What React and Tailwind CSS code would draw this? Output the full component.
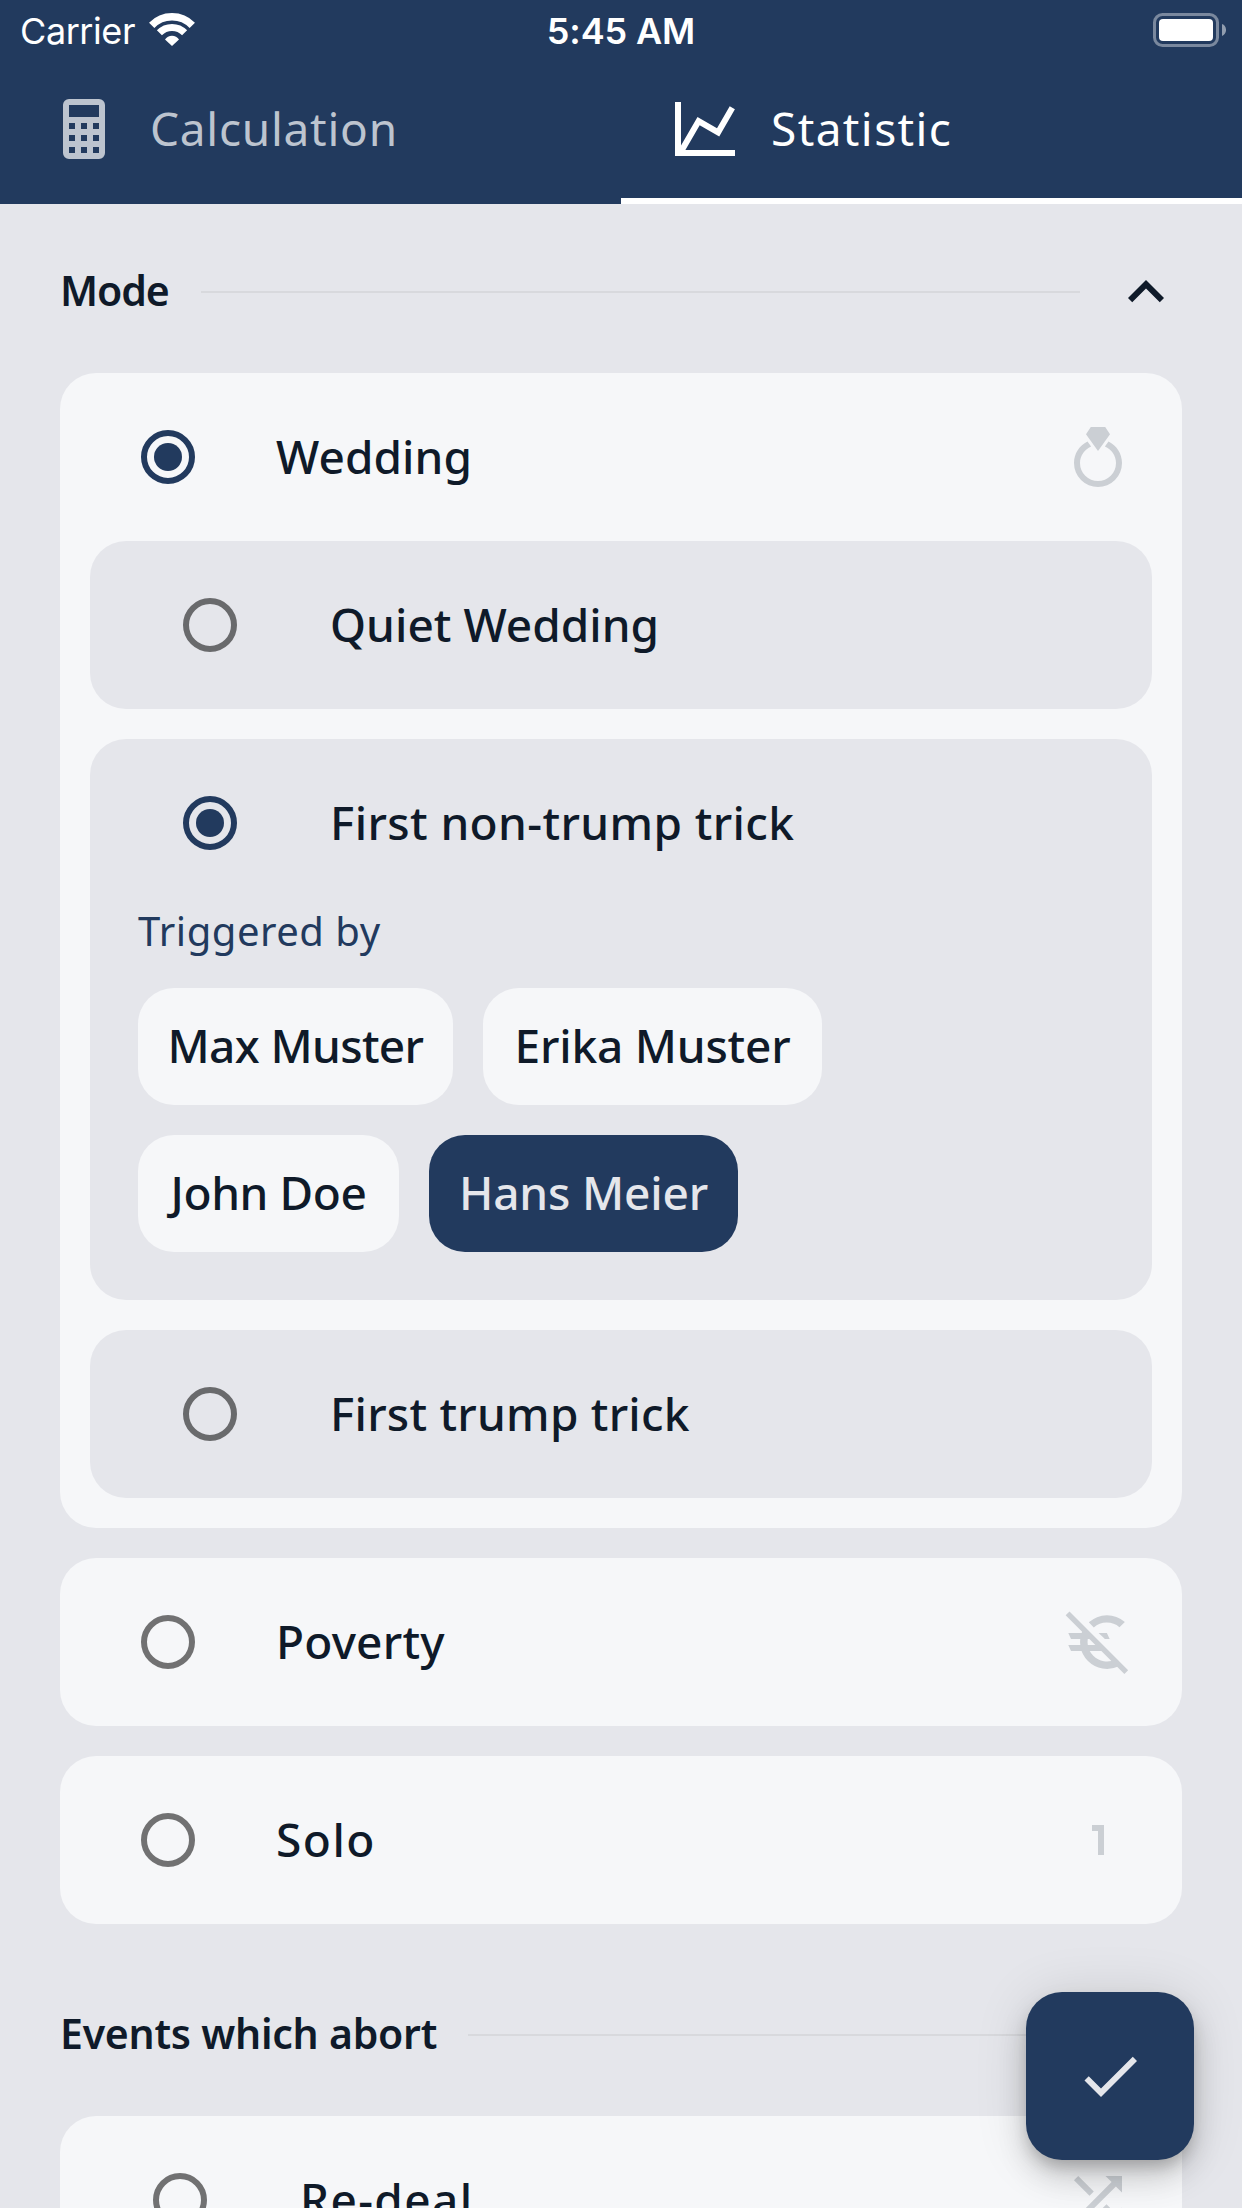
const ICONS = {
  calculator:
    "M7,2H17A2,2 0 0,1 19,4V20A2,2 0 0,1 17,22H7A2,2 0 0,1 5,20V4A2,2 0 0,1 7,2M7,4V8H17V4H7M7,10V12H9V10H7M11,10V12H13V10H11M15,10V12H17V10H15M7,14V16H9V14H7M11,14V16H13V14H11M15,14V16H17V14H15M7,18V20H9V18H7M11,18V20H13V18H11M15,18V20H17V18H15Z",
  chart:
    "M16,11.78L20.24,4.45L21.97,5.45L16.74,14.5L10.23,10.75L5.46,19H22V21H2V3H4V17.54L9.5,8L16,11.78Z",
  chevronUp: "M7.41,15.41L12,10.83L16.59,15.41L18,14L12,8L6,14L7.41,15.41Z",
  ring: "M12,10L8,4.4L9.6,2H14.4L16,4.4L12,10M15.5,6.8L14.3,8.5C16.5,9.4 18,11.5 18,14A6,6 0 0,1 12,20A6,6 0 0,1 6,14C6,11.5 7.6,9.4 9.7,8.5L8.5,6.8C5.8,8.1 4,10.8 4,14A8,8 0 0,0 12,22A8,8 0 0,0 20,14C20,10.8 18.2,8.1 15.5,6.8Z",
  one: "M14,17H12V9H10V7H14V17Z",
  shuffle:
    "M14.83,13.41L13.42,14.82L16.55,17.95L14.5,20H20V14.5L17.96,16.54L14.83,13.41M14.5,4L16.54,6.04L4,18.59L5.41,20L17.96,7.46L20,9.5V4M10.59,9.17L5.41,4L4,5.41L9.17,10.58L10.59,9.17Z",
  check: "M21,7L9,19L3.5,13.5L4.91,12.09L9,16.17L19.59,5.59L21,7Z",
};

function Icon({ name, className = "" }) {
  return (
    <svg viewBox="0 0 24 24" className={`size-[72px] shrink-0 fill-current ${className}`}>
      <path fillRule="evenodd" d={ICONS[name]} />
    </svg>
  );
}

function EuroOffIcon() {
  return (
    <svg viewBox="0 0 24 24" className="size-[72px] shrink-0 fill-current text-[#cbcfd4]">
      <path d="M1.22,3.05L2.5,1.83L22.05,21.4L20.8,22.67Z" />
      <path d="M2.1,9H8L10,11H3ZM2.1,13H12L14,15H3Z" />
      <path d="M8.03,8.63A7.75,7.75 0 0 0 18.37,18.97" fill="none" stroke="currentColor" strokeWidth="2.5" />
      <path d="M8.93,5.45A9,9 0 0 1 20.95,5.3L19.15,7.05A6.5,6.5 0 0 0 10.6,7.15Z" />
      <path d="M12.2,9H14.95L15.9,11H14.3Z" />
    </svg>
  );
}

function Radio({ checked }) {
  return checked ? (
    <span className="flex size-[54px] shrink-0 items-center justify-center rounded-full border-[6px] border-[#223a5e]">
      <span className="size-7 rounded-full bg-[#223a5e]" />
    </span>
  ) : (
    <span className="size-[54px] shrink-0 rounded-full border-[6px] border-black/54" />
  );
}

function Label({ text, tracking }) {
  return (
    <span className={`block pb-[3px] text-[46px] leading-none font-medium whitespace-nowrap ${tracking}`}>{text}</span>
  );
}

function Option({ text, tracking, checked, icon }) {
  return (
    <div className="flex h-[168px] items-center pr-12 pl-[81px]">
      <Radio checked={checked} />
      <div className="ml-[81px] flex-1">
        <Label text={text} tracking={tracking} />
      </div>
      {icon}
    </div>
  );
}

function SubOption({ text, tracking, checked, children }) {
  return (
    <div className="rounded-[36px] bg-[#e5e6eb]">
      <div className="flex h-[168px] items-center pl-[93px]">
        <Radio checked={checked} />
        <div className="ml-[93px]">
          <Label text={text} tracking={tracking} />
        </div>
      </div>
      {children}
    </div>
  );
}

function Chip({ text, tracking, className, selected }) {
  return (
    <div
      className={`flex h-[117px] items-center justify-center rounded-[36px] ${className} ${
        selected ? "bg-[#223a5e] text-[#e5e6eb]" : "bg-[#f6f7f9]"
      }`}
    >
      <Label text={text} tracking={tracking} />
    </div>
  );
}

function SectionHeader({ text, tracking, lineStart }) {
  return (
    <div className="flex h-[72px] items-center">
      <h2 className={`pb-[3px] text-[41px] leading-none font-semibold whitespace-nowrap ${tracking}`}>{text}</h2>
      <div className={`h-[2px] flex-1 bg-[#d8d9dd] ${lineStart}`} />
      <Icon name="chevronUp" className="ml-[30px]" />
    </div>
  );
}

function StatusBar() {
  return (
    <div className="grid h-[60px] grid-cols-3 items-center font-['Inter',sans-serif] text-[36px] leading-none text-white">
      <div className="flex items-center pt-px pl-5">
        <span className="tracking-[-0.42px]">Carrier</span>
        <svg viewBox="0 0 46 33" className="ml-[14px] h-[33px] w-[46px] -translate-y-px">
          <g fill="none" stroke="white">
            <path d="M2.7,12.3A28.3,28.3 0 0 1 43.3,12.3" strokeWidth="7.4" />
            <path d="M10.4,19.8A17.5,17.5 0 0 1 35.6,19.8" strokeWidth="7" />
          </g>
          <path d="M16,26.6A8.2,8.2 0 0 1 30,26.6L23,33Z" fill="white" />
        </svg>
      </div>
      <div className="pt-px text-center font-semibold tracking-[-0.13px]">5:45 AM</div>
      <div className="flex justify-end pr-4">
        <svg viewBox="0 0 73 34" className="h-[34px] w-[73px]">
          <rect x="1.5" y="1.5" width="63" height="31" rx="8" fill="none" stroke="white" strokeOpacity="0.4" strokeWidth="3" />
          <rect x="6" y="6" width="54" height="22" rx="4" fill="white" />
          <path d="M69,11C74.4,13 74.4,21 69,23Z" fill="white" fillOpacity="0.5" />
        </svg>
      </div>
    </div>
  );
}

export default function App() {
  return (
    <div className="relative h-[2208px] w-[1242px] overflow-hidden bg-[#e5e6eb] font-['Noto_Sans',sans-serif] text-[#0f1a29]">
      <header className="bg-[#223a5e]">
        <StatusBar />
        <nav className="grid h-36 grid-cols-2 text-[46px] leading-none">
          <div className="flex items-center pb-[6px] pl-12 text-[#bdc4cf]">
            <Icon name="calculator" />
            <span className="ml-[30px] pb-[2px] tracking-[0.74px]">Calculation</span>
          </div>
          <div className="flex items-center border-b-[6px] border-white pl-12 text-white">
            <Icon name="chart" />
            <span className="ml-[30px] pb-[2px] tracking-[1.4px]">Statistic</span>
          </div>
        </nav>
      </header>

      <main className="px-[60px] pt-[52px]">
        <SectionHeader text="Mode" tracking="tracking-[-1.12px]" lineStart="ml-[32px]" />

        <div className="mt-[45px] flex flex-col gap-[30px]">
          <div className="rounded-[36px] bg-[#f6f7f9] pb-[30px]">
            <Option text="Wedding" tracking="tracking-[0.07px]" checked icon={<Icon name="ring" className="text-[#cbcfd4]" />} />
            <div className="flex flex-col gap-[30px] px-[30px]">
              <SubOption text="Quiet Wedding" tracking="tracking-[0.02px]" />
              <SubOption text="First non-trump trick" tracking="tracking-[0.38px]" checked>
                <div className="px-12 pb-12">
                  <p className="h-[81px] pt-1 text-[40px] leading-none tracking-[0.52px] text-[#223a5e]">Triggered by</p>
                  <div className="flex flex-col gap-[30px]">
                    <div className="flex gap-[30px]">
                      <Chip text="Max Muster" tracking="tracking-[-0.65px]" className="w-[315px]" />
                      <Chip text="Erika Muster" tracking="tracking-[-0.2px]" className="w-[339px]" />
                    </div>
                    <div className="flex gap-[30px]">
                      <Chip text="John Doe" tracking="tracking-[-0.4px]" className="w-[261px]" />
                      <Chip text="Hans Meier" tracking="tracking-[-0.17px]" className="w-[309px]" selected />
                    </div>
                  </div>
                </div>
              </SubOption>
              <SubOption text="First trump trick" tracking="tracking-[0.23px]" />
            </div>
          </div>

          <div className="rounded-[36px] bg-[#f6f7f9]">
            <Option text="Poverty" tracking="tracking-[0.21px]" icon={<EuroOffIcon />} />
          </div>
          <div className="rounded-[36px] bg-[#f6f7f9]">
            <Option text="Solo" tracking="tracking-[1.5px]" icon={<Icon name="one" className="text-[#cbcfd4]" />} />
          </div>
        </div>

        <div className="mt-[75px]">
          <SectionHeader text="Events which abort" tracking="tracking-[-0.25px]" lineStart="ml-[31px]" />
        </div>

        <div className="mt-[45px] flex h-[168px] items-center rounded-t-[36px] bg-[#f6f7f9] pr-12 pl-[93px]">
          <Radio />
          <div className="ml-[93px] flex-1">
            <Label text="Re-deal" tracking="tracking-[1.37px]" />
          </div>
          <Icon name="shuffle" className="text-[#cbcfd4]" />
        </div>
      </main>

      <button className="absolute right-12 bottom-12 flex size-[168px] items-center justify-center rounded-[36px] bg-[#223a5e] text-[#e5e6eb] shadow-[0_9px_15px_-3px_rgba(0,0,0,0.2),0_18px_30px_0_rgba(0,0,0,0.14),0_3px_54px_0_rgba(0,0,0,0.12)]">
        <Icon name="check" />
      </button>
    </div>
  );
}
